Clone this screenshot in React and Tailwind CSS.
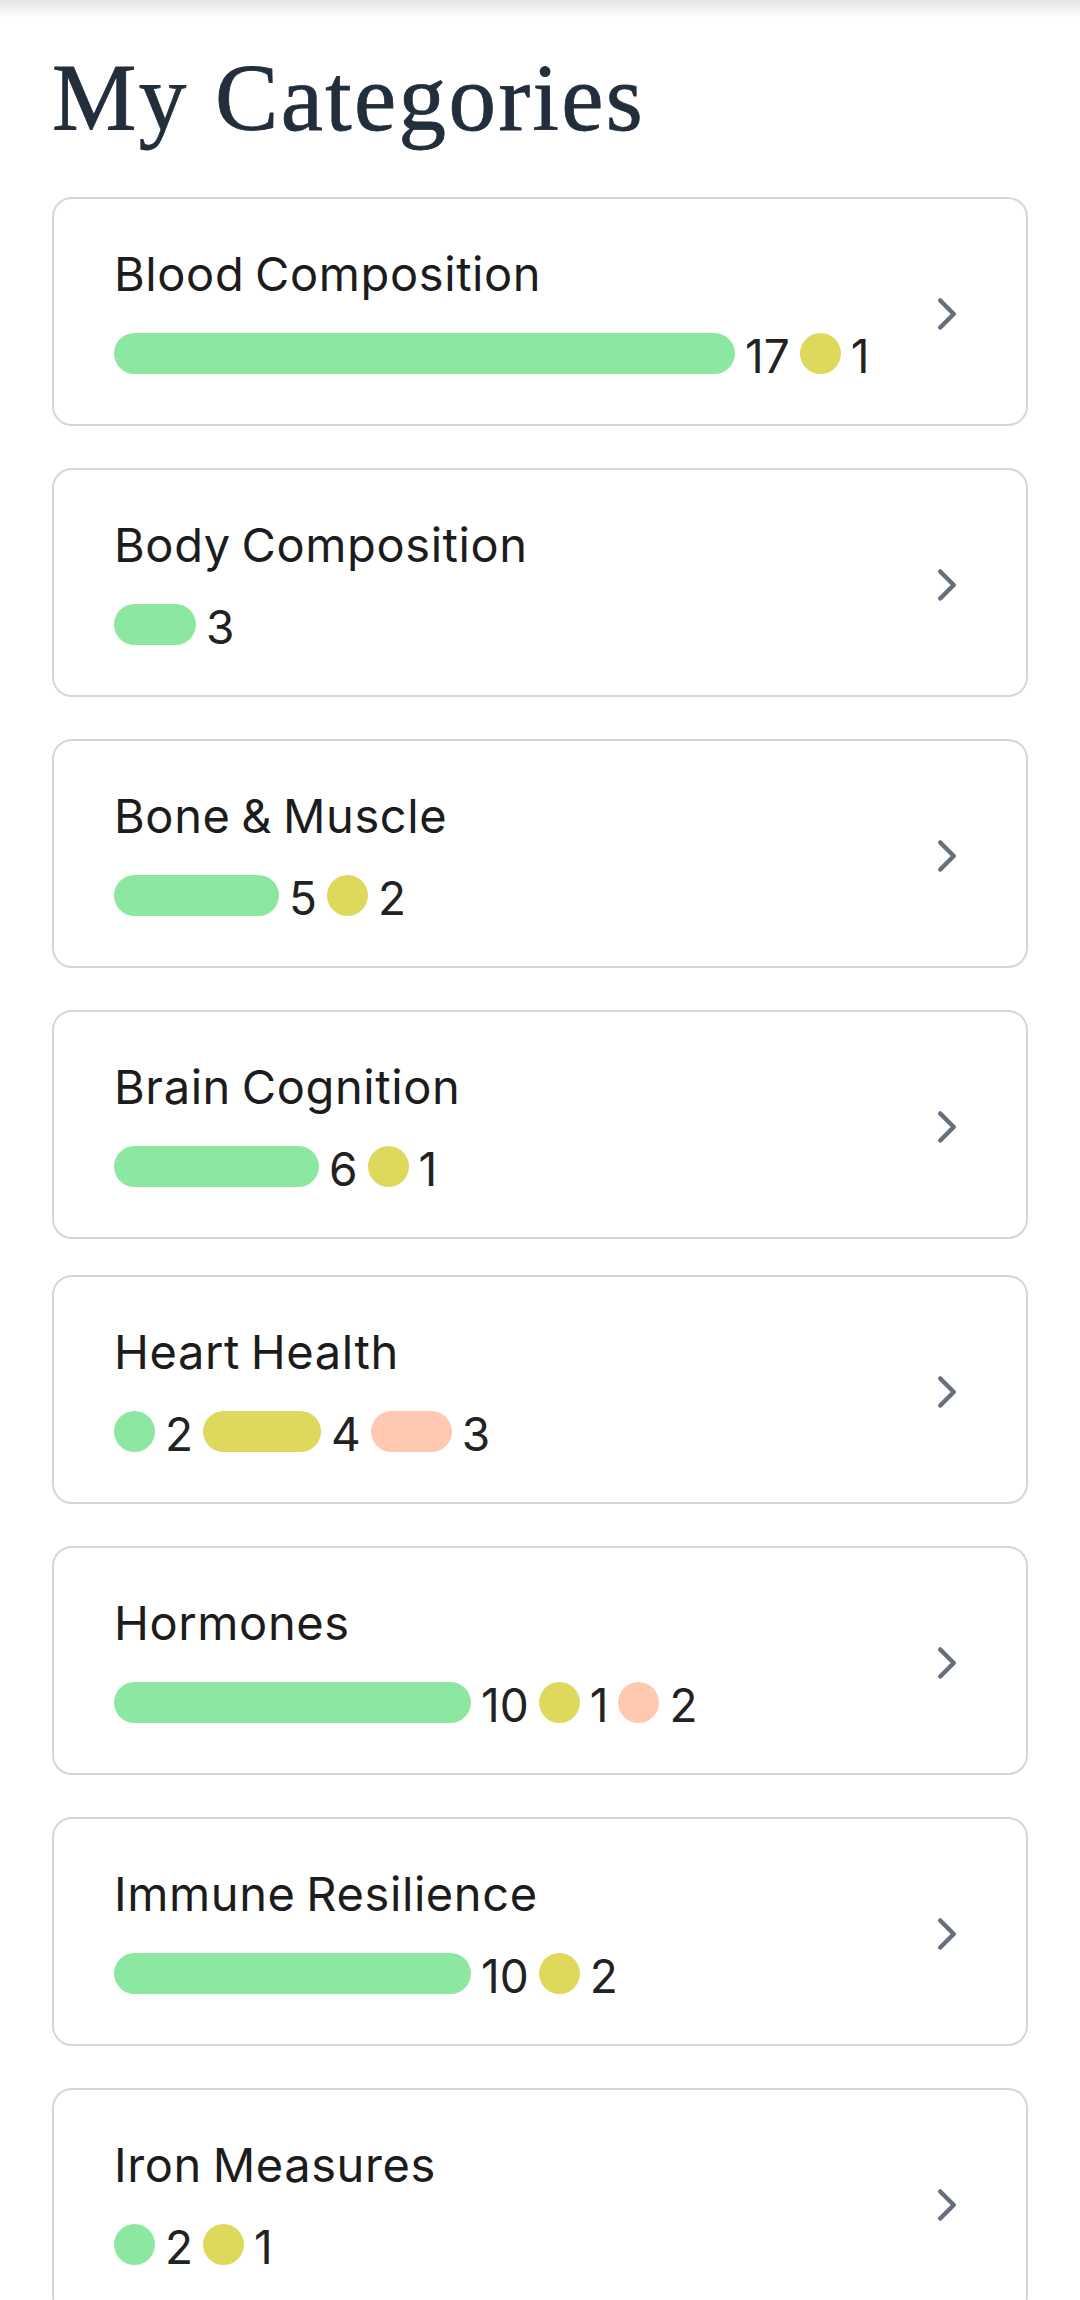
import React from "react";
import { ChevronRight } from "lucide-react";

const COLORS = {
  green: "bg-[#8ce7a1]",
  yellow: "bg-[#ded85c]",
  peach: "bg-[#ffc8b0]",
};

// widths are taken from the design, not computed from counts
const categories = [
  { name: "Blood Composition", parts: [["green", 621, 17], ["yellow", 41, 1]] },
  { name: "Body Composition", parts: [["green", 82, 3]] },
  { name: "Bone & Muscle", parts: [["green", 165, 5], ["yellow", 41, 2]] },
  { name: "Brain Cognition", parts: [["green", 205, 6], ["yellow", 41, 1]] },
  {
    name: "Heart Health",
    tight: true,
    parts: [["green", 41, 2], ["yellow", 118, 4], ["peach", 81, 3]],
  },
  {
    name: "Hormones",
    parts: [["green", 357, 10], ["yellow", 41, 1], ["peach", 41, 2]],
  },
  { name: "Immune Resilience", parts: [["green", 357, 10], ["yellow", 41, 2]] },
  { name: "Iron Measures", parts: [["green", 41, 2], ["yellow", 41, 1]] },
];

const CategoryCard = ({ category }) => (
  <div
    className={`flex items-center justify-between rounded-[20px] border-2 border-[#d3d7db] bg-white pl-[60px] pr-[52px] pt-[47px] pb-[43px] ${
      category.tight ? "mt-[-6px]" : ""
    }`}
  >
    <div className="flex flex-col">
      <div className="text-[47px] leading-[56px] tracking-[0.6px] [word-spacing:-3px] text-[#1c1c1c]">
        {category.name}
      </div>
      <div className="mt-[23px] flex h-[56px] items-center gap-[10px]">
        {category.parts.map(([color, width, count], i) => (
          <React.Fragment key={i}>
            <div
              className={`h-[41px] rounded-full ${COLORS[color]}`}
              style={{ width }}
            />
            <span className="pt-[6px] text-[46px] leading-[56px] text-[#222222]">
              {count}
            </span>
          </React.Fragment>
        ))}
      </div>
    </div>
    <ChevronRight size={54} strokeWidth={2} color="#66707c" />
  </div>
);

export default function App() {
  return (
    <div
      className="min-h-screen bg-white"
      style={{ fontFamily: "Inter, 'Noto Sans', sans-serif" }}
    >
      <div className="h-[18px] bg-linear-to-b from-[#e4e4e4] to-white" />
      <div className="px-[52px]">
        <h1
          className="mt-[33px] text-[95px] leading-[95px] tracking-[2.4px] text-[#222e3c] [-webkit-text-stroke:0.8px_#222e3c]"
          style={{ fontFamily: "'Liberation Serif', serif" }}
        >
          My Categories
        </h1>
        <div className="mt-[51px] flex flex-col gap-[42px]">
          {categories.map((c) => (
            <CategoryCard key={c.name} category={c} />
          ))}
        </div>
      </div>
    </div>
  );
}
